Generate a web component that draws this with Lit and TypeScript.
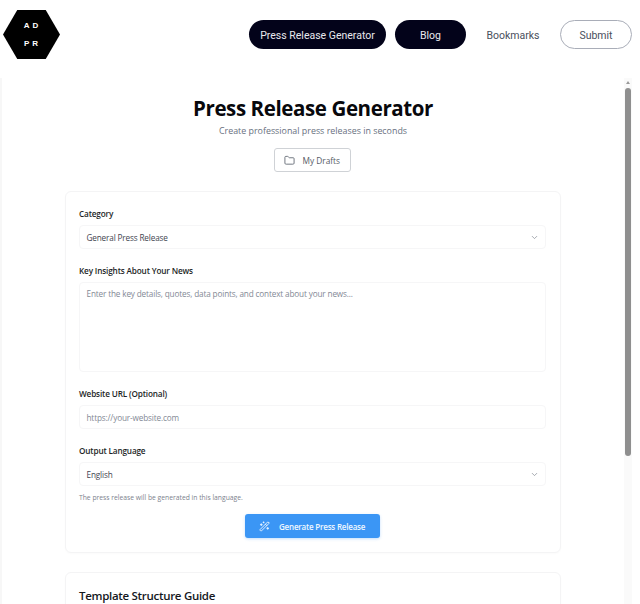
import { LitElement, html, css } from "lit";
import { customElement } from "lit/decorators.js";

const chevron = html`<svg class="chev" viewBox="0 0 24 24" fill="none" stroke="currentColor" stroke-width="2" stroke-linecap="round" stroke-linejoin="round"><path d="m6 9 6 6 6-6"/></svg>`;

@customElement("app-root")
export class AppRoot extends LitElement {
  static styles = css`
    :host { display: block; width: 640px; height: 604px; overflow: hidden; background: #fff; font-family: "Open Sans", "Noto Sans", sans-serif; color: #0a0a0a; }
    * { box-sizing: border-box; }
    header { height: 78px; display: flex; justify-content: space-between; align-items: flex-start; padding: 10px 8px 0 3px; }
    .logo { width: 57px; height: 49px; background: #000; clip-path: polygon(25% 0, 75% 0, 100% 50%, 75% 100%, 25% 100%, 0 50%); color: #fff; display: flex; flex-direction: column; align-items: center; justify-content: center; gap: 7px; font-family: "Liberation Sans", sans-serif; font-size: 8px; font-weight: 700; letter-spacing: 3px; line-height: 11px; padding-left: 2px; }
    nav { display: flex; align-items: center; margin-top: 10px; font-family: Roboto, sans-serif; font-size: 10.5px; }
    nav a { height: 29px; padding-top: 1px; display: flex; align-items: center; justify-content: center; border-radius: 15px; color: #4a4f5c; }
    nav a.dark { background: #03031a; color: #e8e8ee; }
    .a1 { width: 137px; margin-right: 9px; }
    .a2 { width: 71px; margin-right: 21px; }
    .a3 { width: 52px; margin-right: 21px; }
    .a4 { width: 72px; border: 1px solid #a9adb8; }
    .panel { height: 526px; display: flex; border-left: 2px solid #f7f7f7; overflow: hidden; }
    main { width: 622px; flex: none; padding: 16px 63px 0 63px; display: flex; flex-direction: column; align-items: stretch; }
    h1 { margin: 0; text-align: center; font-size: 20.5px; letter-spacing: -0.4px; line-height: 29px; font-weight: 700; color: #08080c; flex: none; }
    .sub { margin: 1px 0 0; text-align: center; font-size: 8.9px; line-height: 14px; color: #687080; flex: none; }
    .drafts { flex: none; align-self: center; margin: 10px 2px 0 0; width: 77px; height: 24px; border: 1px solid #cfd2d6; border-radius: 3px; display: flex; align-items: center; gap: 8px; padding-left: 9px; font-size: 8.3px; color: #555b66; }
    .drafts svg { width: 11px; height: 11px; color: #666c76; }
    .card { margin-top: 19px; border: 1px solid #f4f4f5; border-radius: 6px; padding: 15px 14px 14px 13px; box-shadow: 0 1px 2px rgba(0,0,0,.02); flex: none; }
    label { display: block; font-size: 8.2px; letter-spacing: -0.15px; line-height: 13px; font-weight: 600; color: #1c1f26; margin-bottom: 5px; }
    .field { height: 24px; border: 1px solid #f6f6f7; border-radius: 4px; display: flex; align-items: center; justify-content: space-between; padding: 0 7px 0 6.5px; font-size: 8.2px; letter-spacing: -0.15px; color: #3f4550; margin-bottom: 15px; }
    .ph { color: #838995; }
    .area { height: 90px; align-items: flex-start; padding-top: 5px; }
    .chev { width: 9px; height: 9px; color: #8a8f98; margin-right: -1px; }
    .lang { margin-bottom: 7px; }
    .hint { margin: 0; font-size: 6.75px; line-height: 10px; color: #7c828d; }
    .gen { margin: 11px auto 0; width: 135px; height: 24px; background: #3b96f5; border-radius: 3px; box-shadow: 0 1px 3px rgba(59,150,245,.3); color: #eef6ff; font-size: 8px; letter-spacing: -0.2px; font-weight: 600; display: flex; align-items: center; gap: 9px; padding-left: 14px; }
    .gen svg { width: 11px; height: 11px; }
    .card2 { margin-top: 19px; padding-top: 14px; height: 80px; }
    h2 { margin: 0; font-size: 11.5px; letter-spacing: -0.3px; line-height: 17px; font-weight: 600; color: #14171d; }
    .sb { width: 8px; flex: none; background: #fafafa; display: flex; flex-direction: column; align-items: center; }
    .up { margin-top: 3px; width: 0; height: 0; border-left: 2.5px solid transparent; border-right: 2.5px solid transparent; border-bottom: 3px solid #999; }
    .thumb { margin-top: 4px; width: 6px; height: 368px; background: #8f8f8f; border-radius: 3px; }
  `;

  render() {
    return html`
      <header>
        <div class="logo"><span>AD</span><span>PR</span></div>
        <nav>
          <a class="dark a1">Press Release Generator</a>
          <a class="dark a2">Blog</a>
          <a class="a3">Bookmarks</a>
          <a class="a4">Submit</a>
        </nav>
      </header>
      <div class="panel">
        <main>
          <h1>Press Release Generator</h1>
          <p class="sub">Create professional press releases in seconds</p>
          <div class="drafts">
            <svg viewBox="0 0 24 24" fill="none" stroke="currentColor" stroke-width="2" stroke-linecap="round" stroke-linejoin="round"><path d="M20 20a2 2 0 0 0 2-2V8a2 2 0 0 0-2-2h-7.9a2 2 0 0 1-1.69-.9L9.6 3.9A2 2 0 0 0 7.93 3H4a2 2 0 0 0-2 2v13a2 2 0 0 0 2 2Z"/></svg>
            <span>My Drafts</span>
          </div>
          <section class="card">
            <label>Category</label>
            <div class="field"><span>General Press Release</span>${chevron}</div>
            <label>Key Insights About Your News</label>
            <div class="field area ph">Enter the key details, quotes, data points, and context about your news...</div>
            <label>Website URL (Optional)</label>
            <div class="field ph">https://your-website.com</div>
            <label>Output Language</label>
            <div class="field lang"><span>English</span>${chevron}</div>
            <p class="hint">The press release will be generated in this language.</p>
            <div class="gen">
              <svg viewBox="0 0 24 24" fill="none" stroke="currentColor" stroke-width="2" stroke-linecap="round" stroke-linejoin="round"><path d="m21.64 3.64-1.28-1.28a1.21 1.21 0 0 0-1.72 0L2.36 18.64a1.21 1.21 0 0 0 0 1.72l1.28 1.28a1.2 1.2 0 0 0 1.72 0L21.64 5.36a1.2 1.2 0 0 0 0-1.72"/><path d="m14 7 3 3"/><path d="M5 6v4"/><path d="M19 14v4"/><path d="M10 2v2"/><path d="M7 8H3"/><path d="M21 16h-4"/><path d="M11 3H9"/></svg>
              <span>Generate Press Release</span>
            </div>
          </section>
          <section class="card card2"><h2>Template Structure Guide</h2></section>
        </main>
        <div class="sb"><div class="up"></div><div class="thumb"></div></div>
      </div>
    `;
  }
}
